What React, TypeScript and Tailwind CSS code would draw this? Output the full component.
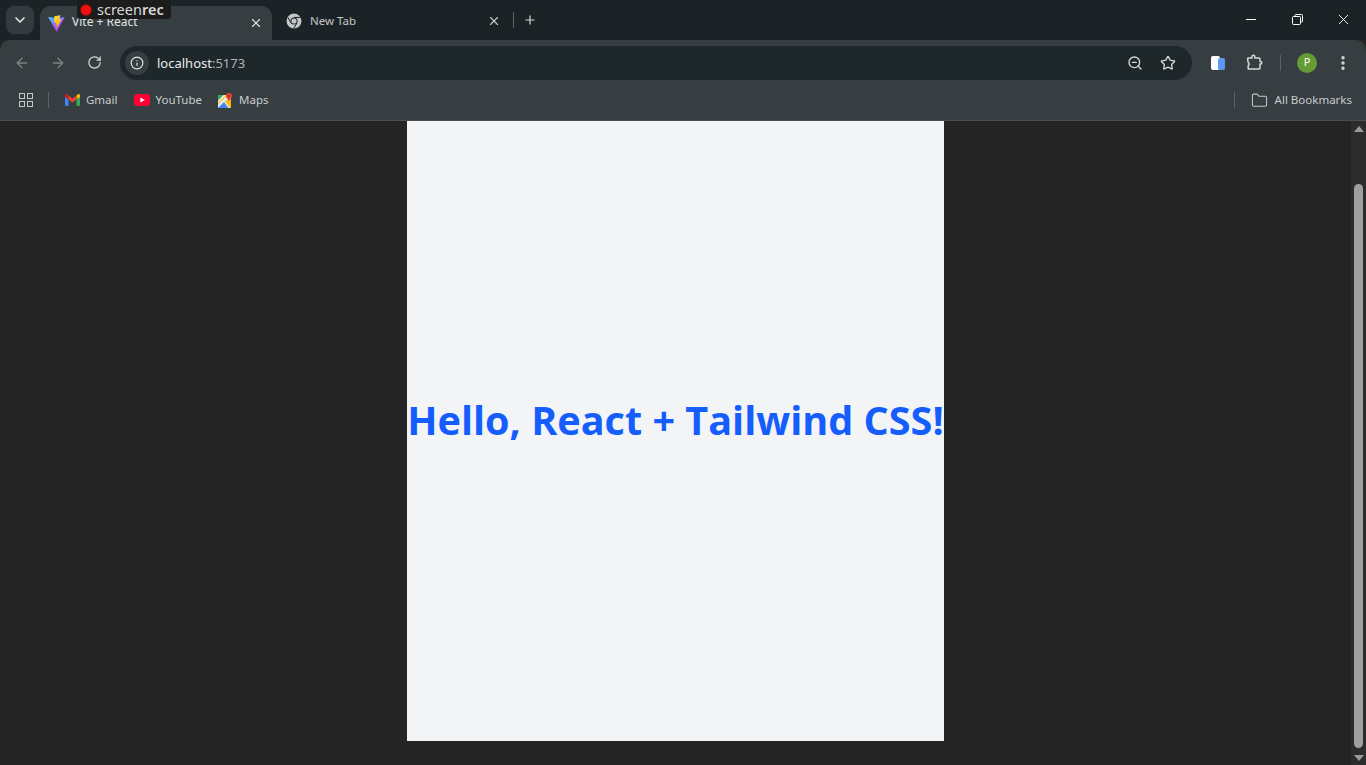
import React from 'react';
import { ChevronDown, X, Plus, ArrowLeft, ArrowRight, RotateCw, Info, ZoomOut, Star, EllipsisVertical, Folder } from 'lucide-react';

const uiFont = "font-['Noto_Sans','Open_Sans',sans-serif]";

const ViteLogo = () => (
  <svg width="17" height="17" viewBox="0 0 410 404">
    <defs>
      <linearGradient id="viteA" x1="6" y1="33" x2="235" y2="344" gradientUnits="userSpaceOnUse">
        <stop stopColor="#41D1FF" />
        <stop offset="1" stopColor="#BD34FE" />
      </linearGradient>
      <linearGradient id="viteB" x1="194" y1="8" x2="236" y2="292" gradientUnits="userSpaceOnUse">
        <stop stopColor="#FFEA83" />
        <stop offset="0.08" stopColor="#FFDD35" />
        <stop offset="1" stopColor="#FFA800" />
      </linearGradient>
    </defs>
    <path d="M399.6 59.5 215 389.6c-3.8 6.8-13.6 6.8-17.5.1L9.3 59.5C5.1 52.1 11.4 43.2 19.8 44.7L204.6 77.7c1.2.2 2.4.2 3.6 0L389.1 44.8c8.3-1.5 14.7 7.3 10.5 14.7Z" fill="url(#viteA)" />
    <path d="M292.9 1.6 156.4 28.3c-2.2.4-3.9 2.3-4 4.6l-8.4 141.9c-.2 3.3 2.9 5.9 6.1 5.2l38-8.8c3.6-.8 6.8 2.3 6.1 5.9l-11.3 55.3c-.8 3.7 2.7 6.9 6.3 5.8l23.5-7.1c3.6-1.1 7.1 2.1 6.3 5.8l-18 87.1c-1.1 5.4 6.1 8.4 9.1 3.7l2-3.1L323.7 102c1.9-3.7-1.3-7.9-5.3-7.1l-39 7.5c-3.7.7-6.8-2.7-5.8-6.3l25.5-88.3c1-3.7-2.1-7.1-5.9-6.4Z" fill="url(#viteB)" />
  </svg>
);

const ChromeLogo = () => (
  <svg width="16" height="16" viewBox="0 0 16 16" fill="none">
    <circle cx="8" cy="8" r="7.5" fill="#c4c7c8" />
    <circle cx="8" cy="8" r="3.6" fill="#1b2326" />
    <circle cx="8" cy="8" r="2.6" fill="#c4c7c8" />
    <path d="M8 4.4h6.6M5 9.8 1.8 4.2M10.9 10.2 7.6 15.4" stroke="#1b2326" strokeWidth="1" />
  </svg>
);

const GmailLogo = () => (
  <svg width="15" height="12" viewBox="0 0 15 12">
    <path d="M0 2.5V10.8C0 11.4.5 12 1 12h2.5V5.5Z" fill="#4285f4" />
    <path d="M15 2.5V10.8c0 .6-.5 1.2-1 1.2h-2.5V5.5Z" fill="#34a853" />
    <path d="M11.5 1.5V5.5L15 2.9V1.6C15 .3 13.6-.4 12.6.4Z" fill="#fbbc04" />
    <path d="M3.5 5.5V1.5L7.5 4.5 11.5 1.5V5.5L7.5 8.5Z" fill="#ea4335" />
    <path d="M0 1.6V2.9L3.5 5.5V1.5L2.4.4C1.4-.4 0 .3 0 1.6Z" fill="#c5221f" />
  </svg>
);

const YoutubeLogo = () => (
  <svg width="16" height="12" viewBox="0 0 16 12">
    <rect width="16" height="12" rx="3" fill="#ff0033" />
    <path d="M6.4 3.4 10.8 6 6.4 8.6Z" fill="#fff" />
  </svg>
);

const MapsLogo = () => (
  <svg width="15" height="15" viewBox="0 0 15 15">
    <rect y="2" width="13" height="13" fill="#e8eaed" />
    <path d="M0 2h5.5L0 7.5Z" fill="#34a853" />
    <path d="M0 10 8 2h1.5L0 11.5Z" fill="#fbbc04" />
    <path d="M0 15 6 9l4.5 6Z" fill="#4285f4" />
    <path d="M7 8l6-2v9h-1Z" fill="#fbbc04" />
    <path d="M11 0a3 3 0 0 0-3 3c0 2 3 5 3 5s3-3 3-5a3 3 0 0 0-3-3Z" fill="#ea4335" />
    <circle cx="11" cy="3" r="1" fill="#8f1d14" />
  </svg>
);

const PuzzleIcon = () => (
  <svg width="17" height="17" viewBox="0 0 17 17" fill="none" stroke="#d5d8d9" strokeWidth="1.5" strokeLinejoin="round">
    <path d="M2 4h4V2.6a1.4 1.4 0 0 1 2.8 0V4h4.2a1 1 0 0 1 1 1v2.6h.6a1.2 1.2 0 0 1 0 2.4H14v4a1 1 0 0 1-1 1H2.2v-3.5a1.6 1.6 0 0 0 .9-1.5 1.6 1.6 0 0 0-.9-1.5L1.6 5A1 1 0 0 1 2 4Z" />
  </svg>
);

const TabSearchButton = () => (
  <div className="w-[28px] h-[28px] rounded-lg bg-[#333b3f] flex items-center justify-center ml-[6px] mt-[6px] shrink-0">
    <ChevronDown className="w-4 h-4 text-[#e3e5e6]" strokeWidth={2.5} />
  </div>
);

const TabStrip = () => (
  <div className="h-[40px] bg-[#1b2326] flex items-start">
    <TabSearchButton />
    <div className="ml-[6px] mt-[6px] w-[232px] h-[34px] bg-[#363e41] rounded-t-[10px] flex items-center pl-[8px] pr-[9px] shrink-0">
      <ViteLogo />
      <span className={`ml-[7px] text-[12px] leading-[14px] mb-[2px] text-[#e3e5e6] flex-1 ${uiFont}`}>Vite + React</span>
      <X className="w-[14px] h-[14px] text-[#e3e5e6]" strokeWidth={2} />
    </div>
    <div className="ml-[14px] mt-[6px] w-[215px] h-[29px] flex items-center shrink-0">
      <ChromeLogo />
      <span className={`ml-[8px] text-[11.5px] text-[#c4c7c8] flex-1 ${uiFont}`}>New Tab</span>
      <X className="w-[14px] h-[14px] text-[#c4c7c8]" strokeWidth={2} />
    </div>
    <div className="ml-[12px] mt-[12px] w-px h-[16px] bg-[#5c6366]" />
    <Plus className="ml-[9px] mt-[13px] w-[14px] h-[14px] text-[#d5d8d9]" strokeWidth={2} />
    <div className="ml-auto flex items-center h-[38px] text-white">
      <div className="w-[46px] flex justify-center"><div className="w-[10px] h-px bg-white" /></div>
      <div className="w-[46px] flex justify-center">
        <svg width="11" height="11" viewBox="0 0 11 11" fill="none" stroke="currentColor">
          <rect x="0.5" y="2.5" width="8" height="8" rx="1" />
          <path d="M3 2.5V1.5a1 1 0 0 1 1-1h5.5a1 1 0 0 1 1 1V7a1 1 0 0 1-1 1h-1" />
        </svg>
      </div>
      <div className="w-[46px] flex justify-center"><X className="w-[17px] h-[17px]" strokeWidth={1.3} /></div>
    </div>
  </div>
);

const Toolbar = () => (
  <div className="h-[45px] flex items-center bg-[#363e41] rounded-t-[10px]">
    <ArrowLeft className="ml-[14px] w-[16px] h-[16px] text-[#7d8486]" strokeWidth={2} />
    <ArrowRight className="ml-[20px] w-[16px] h-[16px] text-[#7d8486]" strokeWidth={2} />
    <RotateCw className="ml-[21px] w-[15px] h-[15px] text-[#d5d8d9]" strokeWidth={2} />
    <div className="ml-[18px] w-[1072px] h-[34px] rounded-full bg-[#1e282b] flex items-center pl-[5px] pr-[16px] shrink-0">
      <div className="w-[24px] h-[24px] rounded-full bg-[#363e41] flex items-center justify-center">
        <Info className="w-[14px] h-[14px] text-[#e3e5e6]" strokeWidth={2} />
      </div>
      <span className={`ml-[8px] pt-[2px] text-[13px] text-[#aeb3b5] flex-1 ${uiFont}`}>
        <span className="text-[#e8eaeb]">localhost</span>:5173
      </span>
      <ZoomOut className="w-[16px] h-[16px] text-[#d5d8d9]" strokeWidth={2} />
      <Star className="ml-[17px] w-[16px] h-[16px] text-[#d5d8d9]" strokeWidth={2} />
    </div>
    <div className="ml-[19px] relative w-[14px] h-[14px] shrink-0">
      <div className="absolute left-0 top-0 w-[9px] h-[14px] rounded-[2px] bg-white" />
      <div className="absolute right-0 top-[2px] w-[7px] h-[12px] rounded-[2px] bg-[#5b9bf5]" />
    </div>
    <div className="ml-[21px]"><PuzzleIcon /></div>
    <div className="ml-[17px] w-px h-[16px] bg-[#5c6366]" />
    <div className={`ml-[16px] w-[20px] h-[20px] rounded-full bg-[#659c35] flex items-center justify-center text-[11px] text-white ${uiFont}`}>P</div>
    <EllipsisVertical className="ml-[17px] w-[18px] h-[18px] text-[#d5d8d9]" strokeWidth={2.5} />
  </div>
);

const Bookmark = ({ icon, label }: { icon: React.ReactNode; label: string }) => (
  <div className="flex items-center gap-[6px]">
    {icon}
    <span className={`text-[11.5px] text-[#c9cccd] ${uiFont}`}>{label}</span>
  </div>
);

const BookmarksBar = () => (
  <div className="h-[36px] flex items-center bg-[#363e41] border-b border-[#4a5154] pb-[5px]">
    <div className="ml-[19px] grid grid-cols-2 gap-[2px]">
      <div className="w-[6px] h-[6px] border border-[#c4c7c8]" />
      <div className="w-[6px] h-[6px] border border-[#c4c7c8]" />
      <div className="w-[6px] h-[6px] border border-[#c4c7c8]" />
      <div className="w-[6px] h-[6px] border border-[#c4c7c8]" />
    </div>
    <div className="ml-[15px] w-px h-[16px] bg-[#5c6366]" />
    <div className="ml-[16px] flex items-center gap-[16px]">
      <Bookmark icon={<GmailLogo />} label="Gmail" />
      <Bookmark icon={<YoutubeLogo />} label="YouTube" />
      <Bookmark icon={<MapsLogo />} label="Maps" />
    </div>
    <div className="ml-auto flex items-center">
      <div className="w-px h-[16px] bg-[#5c6366]" />
      <Folder className="ml-[16px] w-[17px] h-[17px] text-[#c4c7c8]" strokeWidth={1.5} />
      <span className={`ml-[7px] mr-[14px] text-[11.5px] text-[#c9cccd] ${uiFont}`}>All Bookmarks</span>
    </div>
  </div>
);

const Scrollbar = () => (
  <div className="w-[15px] bg-[#2c2c2c] flex flex-col items-center shrink-0">
    <div className="mt-[5px] w-0 h-0 border-x-[5px] border-x-transparent border-b-[6px] border-b-[#9a9a9a]" />
    <div className="mt-[52px] w-[9px] h-[564px] rounded-full bg-[#9f9f9f]" />
    <div className="mt-[7px] w-0 h-0 border-x-[5px] border-x-transparent border-t-[6px] border-t-[#9a9a9a]" />
  </div>
);

export default function App() {
  return (
    <div className="relative h-[765px] overflow-hidden flex flex-col bg-[#242424]">
      <TabStrip />
      <Toolbar />
      <BookmarksBar />

      {/* Page content */}
      <div className="flex flex-1 min-h-0">
        <div className="flex-1 flex justify-center items-start">
          <div className="h-[620px] pb-[20px] bg-gray-100 flex items-center justify-center">
            <h1 className="text-[39.6px] font-bold text-blue-600 font-['Open_Sans',sans-serif] whitespace-nowrap">
              Hello, React + Tailwind CSS!
            </h1>
          </div>
        </div>
        <Scrollbar />
      </div>

      {/* Recorder badge */}
      <div className="absolute left-[77px] top-0 w-[94px] h-[19px] bg-[#1c1c1c] rounded-b-[3px] flex items-center pl-[3px]">
        <div className="w-[12px] h-[12px] rounded-full bg-[#f01010] border border-[#7a1010]" />
        <span className={`ml-[5px] text-[14.5px] leading-[17px] text-[#d8d8d8] ${uiFont}`}>
          screen<span className="font-semibold">rec</span>
        </span>
      </div>
    </div>
  );
}
